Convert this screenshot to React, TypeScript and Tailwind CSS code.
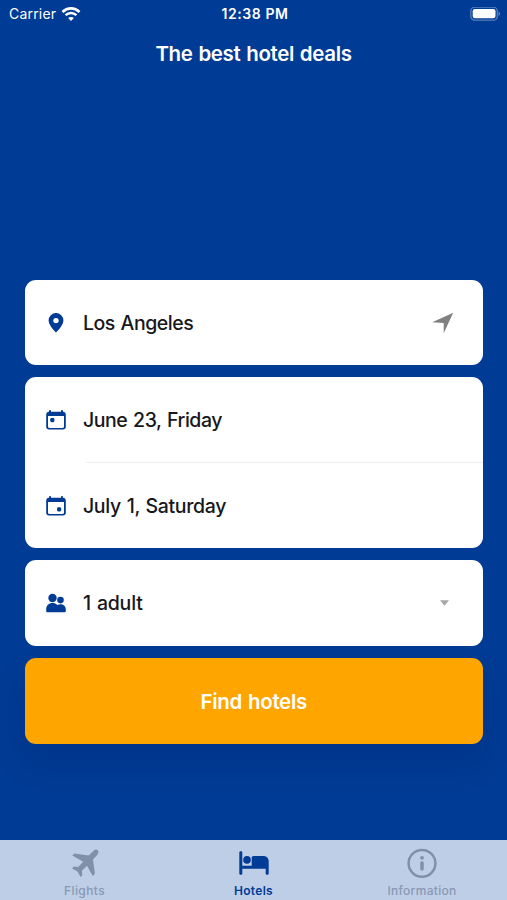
import type { ReactNode } from "react";

type RowProps = {
  icon: ReactNode;
  label: string;
  spacing: string;
  trailing?: ReactNode;
};

function WifiIcon() {
  return (
    <svg className="ml-[5px] h-[15px] w-5" viewBox="0 0 20 15" fill="none" stroke="white">
      <path d="M1.5 5C6.4.2 13.6.2 18.5 5" strokeWidth="2.7" />
      <path d="M4.6 8.2c3.1-3 7.7-3 10.8 0" strokeWidth="2.5" />
      <path d="M10 13.9l-2.9-2.9c1.6-1.5 4.2-1.5 5.8 0z" fill="white" stroke="none" />
    </svg>
  );
}

function BatteryIcon() {
  return (
    <svg className="h-[15px] w-[31px]" viewBox="0 0 31 15" fill="none">
      <rect x="0.8" y="0.2" width="26.5" height="13" rx="4" stroke="white" strokeOpacity="0.35" strokeWidth="1.3" />
      <rect x="2.7" y="2.1" width="22.8" height="9.2" rx="2.2" fill="white" />
      <path d="M28.6 4.5c2 .8 2 3.6 0 4.4z" fill="white" fillOpacity="0.4" />
    </svg>
  );
}

function PinIcon() {
  return (
    <svg className="h-5 w-5" viewBox="0 0 20 20" fill="#003b95">
      <path fillRule="evenodd" d="M10 0a7.4 7.4 0 0 0-7.4 7.4c0 5.1 7.4 12 7.4 12s7.4-6.9 7.4-12A7.4 7.4 0 0 0 10 0zm0 4.9a2.7 2.7 0 1 1 0 5.4 2.7 2.7 0 0 1 0-5.4z" />
    </svg>
  );
}

function CalendarIcon({ end = false }: { end?: boolean }) {
  return (
    <svg className="h-5 w-5" viewBox="0 0 20 20" fill="#003b95">
      <path fillRule="evenodd" d="M3 .2h2v1.6h10V.2h2v1.6c1.7 0 2.8 1.1 2.8 2.8v12.2c0 1.7-1.1 2.8-2.8 2.8H3c-1.7 0-2.8-1.1-2.8-2.8V4.6c0-1.7 1.1-2.8 2.8-2.8zM2 6.1v10.5c0 .8.5 1.3 1.3 1.3h13.4c.8 0 1.3-.5 1.3-1.3V6.1z" />
      <rect x={end ? 11 : 4.2} y={end ? 11.2 : 8} width="4.2" height="4.2" rx="1.4" />
    </svg>
  );
}

function GuestsIcon() {
  return (
    <svg className="h-5 w-5" viewBox="0 0 20 20" fill="#003b95">
      <circle cx="6.5" cy="5" r="4.2" />
      <circle cx="14.5" cy="7.1" r="3.3" />
      <path d="M.2 16.2c0-3.6 2.7-6.1 6.2-6.1 2 0 3.5.6 4.8 1.9 4.2-2.1 8.6.2 8.6 4.2v1.7c0 .8-.6 1.3-1.3 1.3h-17c-.8 0-1.3-.5-1.3-1.3z" />
    </svg>
  );
}

function Row({ icon, label, spacing, trailing }: RowProps) {
  return (
    <div className="flex h-[85.5px] items-center pl-[21px] pr-[29px] pt-px">
      {icon}
      <span className={`ml-[17px] flex-1 whitespace-nowrap text-[19.5px] font-medium leading-6 text-[#17171c] [word-spacing:1px] ${spacing}`}>{label}</span>
      {trailing}
    </div>
  );
}

export default function App() {
  return (
    <div className="flex h-[900px] w-[507px] flex-col overflow-hidden bg-[#003b95] font-['Inter','Liberation_Sans',sans-serif] text-white">
      <div className="grid h-7 grid-cols-3 items-center pl-[9px] pr-[6px]">
        <div className="flex items-center text-[14px] leading-4 tracking-[0.2px]">
          Carrier
          <WifiIcon />
        </div>
        <span className="text-center text-[14px] font-semibold leading-4 tracking-[0.6px]">12:38 PM</span>
        <div className="flex justify-end">
          <BatteryIcon />
        </div>
      </div>
      <h1 className="mt-3 text-center text-[20.5px] font-semibold leading-7 tracking-[-0.35px] [word-spacing:1px]">The best hotel deals</h1>

      <main className="mt-[211.5px] flex flex-col gap-3 pl-[25px] pr-[24.5px]">
        <section className="rounded-[11px] bg-white">
          <Row
            icon={<PinIcon />}
            label="Los Angeles"
            spacing="tracking-[-0.47px]"
            trailing={
              <svg className="h-[22px] w-[22px]" viewBox="0 0 22 22" fill="#808080">
                <path d="M21.2.7L11.7 21.3V11L.2 10.2z" />
              </svg>
            }
          />
        </section>
        <section className="rounded-[11px] bg-white">
          <Row icon={<CalendarIcon />} label="June 23, Friday" spacing="tracking-[-0.45px]" />
          <div className="-mt-px ml-[61px] h-px bg-[#eeeeef]" />
          <Row icon={<CalendarIcon end />} label="July 1, Saturday" spacing="tracking-[-0.35px]" />
        </section>
        <section className="rounded-[11px] bg-white">
          <Row
            icon={<GuestsIcon />}
            label="1 adult"
            spacing="tracking-[-0.2px]"
            trailing={
              <svg className="mr-[5px] h-[6px] w-[9px]" viewBox="0 0 9 6" fill="#a7a7ab">
                <path d="M0 .2h9L4.5 5.7z" />
              </svg>
            }
          />
        </section>
        <button className="h-[86px] rounded-[11px] bg-[#ffa500] pt-[3px] text-[20.5px] font-semibold tracking-[-0.3px] shadow-[0_18px_34px_rgba(0,10,60,0.12)] [word-spacing:1px]">Find hotels</button>
      </main>

      <nav className="mt-auto grid h-[60px] grid-cols-3 bg-[#bfcee7] text-[12px] font-medium leading-[14px] text-[#8798b3]">
        <div className="flex flex-col items-center pt-2">
          <svg className="h-[30px] w-[30px]" viewBox="0 0 30 30" fill="#8090a8">
            <path d="M27.7 2.3c-1.2-1.2-2.9-.8-4.3.6l-4.7 4.5-14.2-2-2.2 2.2 10.9 6.2-5 5.3-4.4-.5L2 20.4l5.6 3L10.5 29l1.8-1.8-.4-4.4 5.1-5L22.7 28l2.2-2.2L23 11.5l4.2-4.6c1.3-1.5 1.7-3.4.5-4.6z" />
          </svg>
          <span className="mt-[6px] tracking-[0.4px]">Flights</span>
        </div>
        <div className="flex flex-col items-center pt-2 text-[#003b95]">
          <svg className="h-[30px] w-[30px]" viewBox="0 0 30 30" fill="currentColor">
            <path d="M.3 4.6c0-1.8 3-1.8 3 0v13.2h9.4V9.7c0-1.1.6-1.8 1.8-1.8h9.8c3.3 0 5.4 2.2 5.4 5.3v12.2c0 1.8-3 1.8-3 0v-4.6H3.3v4.6c0 1.8-3 1.8-3 0z" />
            <circle cx="8" cy="11.9" r="3.8" />
          </svg>
          <span className="mt-[6px] font-semibold tracking-[0.3px]">Hotels</span>
        </div>
        <div className="flex flex-col items-center pt-2 pr-px">
          <svg className="h-[30px] w-[30px]" viewBox="0 0 30 30" fill="none" stroke="#8090a8">
            <circle cx="15" cy="15.3" r="13.4" strokeWidth="2.5" />
            <circle cx="15" cy="9.8" r="1.9" fill="#8090a8" stroke="none" />
            <path d="M15 14.9v6.1" strokeWidth="3.5" strokeLinecap="round" />
          </svg>
          <span className="mt-[6px] tracking-[0.3px]">Information</span>
        </div>
      </nav>
    </div>
  );
}
